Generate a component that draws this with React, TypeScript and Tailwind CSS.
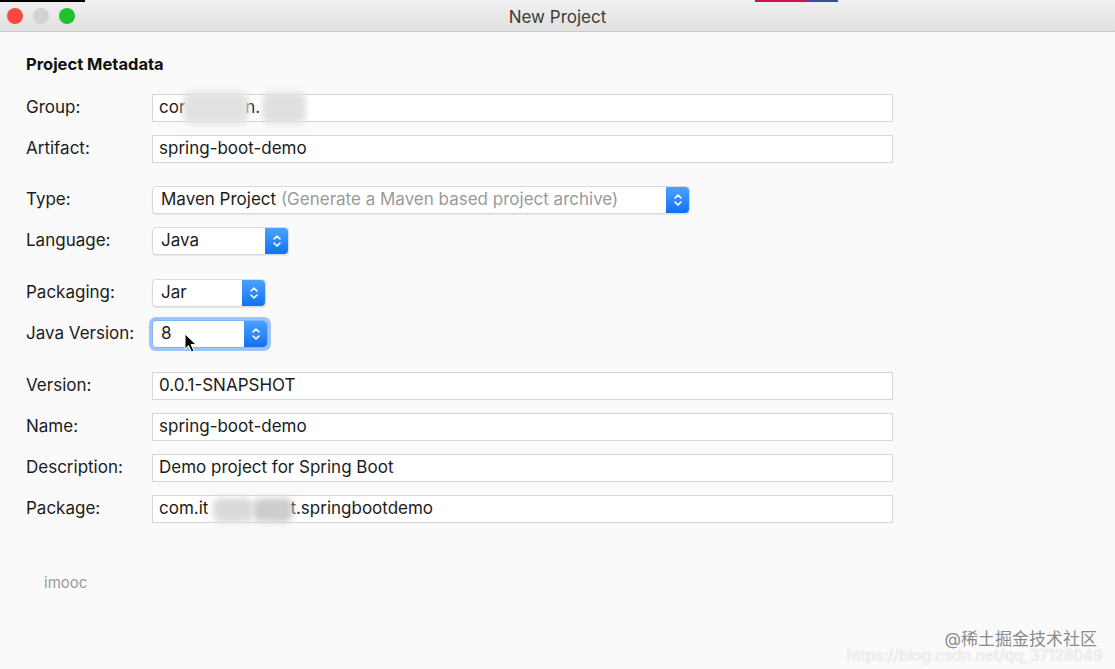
import React from "react";

const font = { fontFamily: '"Inter", "Liberation Sans", "Noto Sans CJK SC", sans-serif' };

function Stepper() {
  return (
    <div className="flex h-full w-[23px] items-center justify-center rounded-r-[4px] bg-gradient-to-b from-[#4aa2ff] to-[#1170f0]">
      <svg width="10" height="16" viewBox="0 0 10 16" fill="none" stroke="white" strokeWidth="1.6" strokeLinecap="round" strokeLinejoin="round">
        <path d="M2 6 L5 3 L8 6" />
        <path d="M2 10 L5 13 L8 10" />
      </svg>
    </div>
  );
}

function Field({ children }: { children?: React.ReactNode }) {
  return (
    <div className="relative flex h-[28px] w-[741px] items-center border border-[#d6d6d6] bg-white pl-[6px] text-[17px] text-[#1c1c1c]">
      {children}
    </div>
  );
}

function Select({ width, children, focused }: { width: string; children: React.ReactNode; focused?: boolean }) {
  return (
    <div
      className={`flex h-[28px] ${width} items-center rounded-[4px] border bg-white text-[17px] text-[#1c1c1c] ${
        focused ? "border-[#7fb3f5] shadow-[0_0_0_3px_#9cc4f7]" : "border-[#dadada] shadow-[0_1px_1px_rgba(0,0,0,0.08)]"
      }`}
    >
      <div className="flex-1 truncate pl-[8px]">{children}</div>
      <Stepper />
    </div>
  );
}

function Row({ label, children, className = "" }: { label: string; children: React.ReactNode; className?: string }) {
  return (
    <div className={`flex h-[28px] items-center ${className}`}>
      <div className="w-[126px] text-[17px] text-[#1c1c1c]">{label}</div>
      {children}
    </div>
  );
}

function Smudge({ className }: { className: string }) {
  return <div className={`absolute rounded-[8px] blur-[3px] ${className}`} />;
}

export default function App() {
  return (
    <div className="relative h-[669px] w-[1115px] overflow-hidden bg-[#fafafa]" style={font}>
      {/* title bar */}
      <div className="relative flex h-[32px] items-center border-b border-[#c9c9c9] bg-gradient-to-b from-[#f1f1f1] to-[#e0e0e0]">
        <div className="absolute left-0 top-0 h-[2px] w-[85px] bg-black" />
        <div className="absolute left-[755px] top-0 h-[2px] w-[52px] bg-[#d0104c]" />
        <div className="absolute left-[807px] top-0 h-[2px] w-[31px] bg-[#3a4fa8]" />
        <div className="flex gap-[10px] pl-[7px] pt-[1px]">
          <div className="h-[16px] w-[16px] rounded-full bg-[#fc4744]" />
          <div className="h-[16px] w-[16px] rounded-full bg-[#d3d3d3]" />
          <div className="h-[16px] w-[16px] rounded-full bg-[#20c22e]" />
        </div>
        <div className="absolute left-0 right-0 top-[5px] text-center text-[17px] text-[#3b3b3b]">New Project</div>
      </div>

      {/* form */}
      <div className="flex flex-col pl-[26px] pt-[20px]">
        <div className="mb-[17px] text-[16.5px] font-bold text-[#111]">Project Metadata</div>
        <div className="flex flex-col gap-[13px]">
          <Row label="Group:">
            <Field>
              <span>cor</span>
              <span className="ml-[60px]">n.</span>
              <Smudge className="left-[30px] top-[-3px] h-[32px] w-[66px] bg-[#e2e2e2]" />
              <Smudge className="left-[109px] top-[-3px] h-[32px] w-[44px] bg-[#e0e0e0]" />
            </Field>
          </Row>
          <Row label="Artifact:">
            <Field>spring-boot-demo</Field>
          </Row>
          <Row label="Type:" className="mt-[10px]">
            <Select width="w-[538px]">
              Maven Project <span className="text-[#9a9a9a]">(Generate a Maven based project archive)</span>
            </Select>
          </Row>
          <Row label="Language:">
            <Select width="w-[137px]">Java</Select>
          </Row>
          <Row label="Packaging:" className="mt-[11px]">
            <Select width="w-[114px]">Jar</Select>
          </Row>
          <Row label="Java Version:">
            <Select width="w-[116px]" focused>
              8
            </Select>
          </Row>
          <Row label="Version:" className="mt-[11px]">
            <Field>0.0.1-SNAPSHOT</Field>
          </Row>
          <Row label="Name:">
            <Field>spring-boot-demo</Field>
          </Row>
          <Row label="Description:">
            <Field>Demo project for Spring Boot</Field>
          </Row>
          <Row label="Package:">
            <Field>
              <span>com.it</span>
              <span className="ml-[82px]">t.springbootdemo</span>
              <Smudge className="left-[60px] top-[2px] h-[24px] w-[40px] rounded-[2px] bg-[#dadada]" />
              <Smudge className="left-[100px] top-[2px] h-[24px] w-[40px] rounded-[2px] bg-[#cdcdcd]" />
            </Field>
          </Row>
        </div>
        <div className="ml-[18px] mt-[49px] text-[15px] text-[#9b9b9b]">imooc</div>
      </div>

      {/* mouse pointer */}
      <svg className="absolute left-[184px] top-[333px]" width="14" height="21" viewBox="0 0 14 21">
        <path d="M1 1 L1 16 L4.5 12.5 L7.5 19 L10 18 L7 11.5 L12 11.5 Z" fill="black" stroke="white" strokeWidth="1" />
      </svg>

      {/* watermark */}
      <div className="absolute right-[12px] top-[644px] text-[15.5px] text-white/80 [text-shadow:0_0_1px_#bbb]">
        https://blog.csdn.net/qq_37128049
      </div>
      <div className="absolute right-[18px] top-[627px] text-[17px] text-[#8a8a8a] [text-shadow:0_0_2px_#fff]">
        @稀土掘金技术社区
      </div>
    </div>
  );
}
